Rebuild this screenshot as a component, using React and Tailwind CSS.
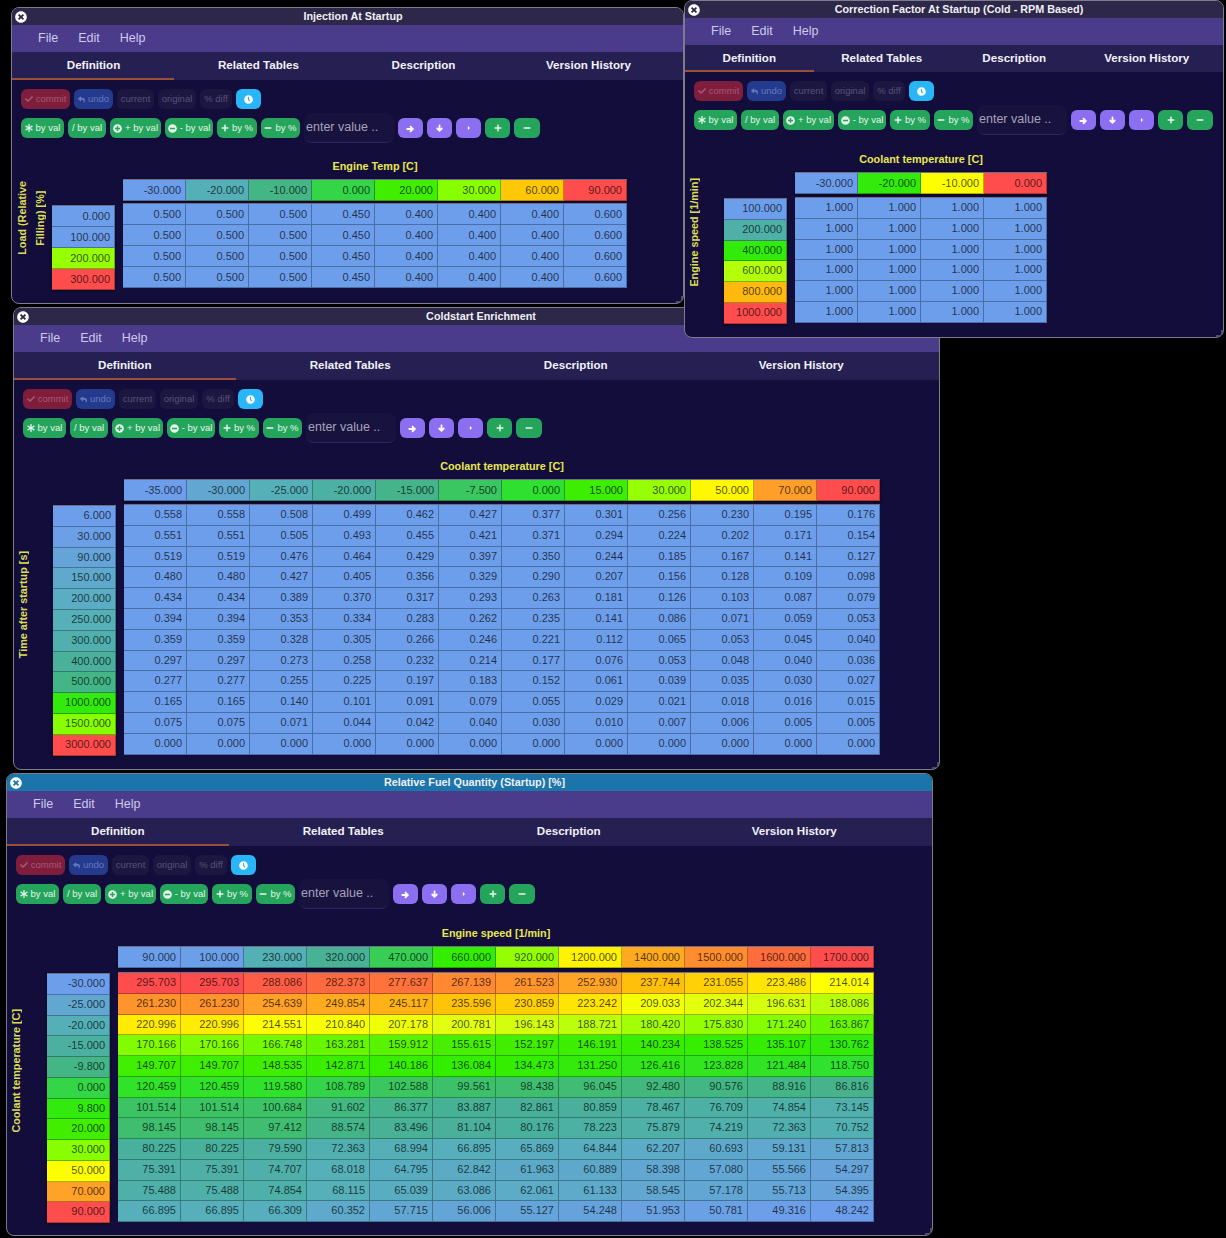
import React from "react";
import {
  FaCheck,
  FaReply,
  FaClock,
  FaAsterisk,
  FaPlusCircle,
  FaMinusCircle,
  FaPlus,
  FaMinus,
  FaCaretRight,
  FaTimesCircle,
} from "react-icons/fa";
import { TiArrowRightThick, TiArrowDownThick } from "react-icons/ti";

// heat stops taken off the table cells, position 0..1 -> rgb
const STOPS = [
  [0, [109, 158, 235]],
  [0.08, [85, 176, 184]],
  [0.14, [72, 176, 152]],
  [0.2, [63, 189, 112]],
  [0.27, [47, 222, 55]],
  [0.35, [51, 238, 0]],
  [0.43, [68, 238, 0]],
  [0.5, [136, 255, 0]],
  [0.61, [221, 255, 17]],
  [0.67, [255, 255, 0]],
  [0.76, [255, 193, 7]],
  [0.84, [255, 159, 42]],
  [0.885, [255, 136, 48]],
  [1, [255, 77, 77]],
];

function heat(t) {
  for (let i = 1; i < STOPS.length; i++) {
    const [p1, c1] = STOPS[i];
    const [p0, c0] = STOPS[i - 1];
    if (t <= p1) {
      const k = (t - p0) / (p1 - p0);
      return `rgb(${c0.map((c, n) => Math.round(c + (c1[n] - c) * k)).join(",")})`;
    }
  }
  return "rgb(255,77,77)";
}

function scale(values) {
  const min = Math.min(...values);
  const max = Math.max(...values);
  return values.map((v) => (v - min) / (max - min));
}

const BLUE = heat(0);

function Cell({ value, color, size }) {
  return (
    <div
      className={`w-[63px] shrink-0 border-r border-b border-black/30 pr-[4px] text-right text-[11px] text-black/70 ${size}`}
      style={{ backgroundColor: color }}
    >
      {value.toFixed(3)}
    </div>
  );
}

const pill = "flex items-center justify-center gap-[3px] h-[20px] rounded-[6px] text-[9.5px] shrink-0";
const green = `${pill} bg-[#25a55c] text-[#e4f5ea]`;
const muted = `${pill} bg-[#1c1740] text-[#57527d]`;
const purple = `${pill} w-[25px] bg-[#8b6ff0] text-white`;

function Toolbar() {
  return (
    <div className="pl-[9px] pt-[9px]">
      <div className="flex gap-[4px]">
        <div className={`${pill} w-[49px] bg-[#7f1d3c] text-[#a85a74]`}>
          <FaCheck size={8} /> commit
        </div>
        <div className={`${pill} w-[39px] bg-[#243a8c] text-[#6478c0]`}>
          <FaReply size={7} /> undo
        </div>
        <div className={`${muted} w-[37px]`}>current</div>
        <div className={`${muted} w-[38px]`}>original</div>
        <div className={`${muted} w-[32px]`}>% diff</div>
        <div className={`${pill} w-[25px] bg-[#29b6f6] text-white`}>
          <FaClock size={9} />
        </div>
      </div>
      <div className="flex items-center gap-[4px] h-[20px] mt-[9px]">
        <div className={`${green} w-[43px]`}>
          <FaAsterisk size={8} /> by val
        </div>
        <div className={`${green} w-[38px]`}>/ by val</div>
        <div className={`${green} w-[51px]`}>
          <FaPlusCircle size={9} /> + by val
        </div>
        <div className={`${green} w-[48px]`}>
          <FaMinusCircle size={9} /> - by val
        </div>
        <div className={`${green} w-[40px]`}>
          <FaPlus size={8} /> by %
        </div>
        <div className={`${green} w-[39px]`}>
          <FaMinus size={8} /> by %
        </div>
        <div className="flex items-center w-[90px] h-[30px] shrink-0 rounded-[8px] border-b border-[#2c2660] bg-[#18123f] pl-[2px] text-[12.5px] text-[#a6a3bb]">
          enter value ..
        </div>
        <div className={purple}>
          <TiArrowRightThick size={11} />
        </div>
        <div className={purple}>
          <TiArrowDownThick size={11} />
        </div>
        <div className={purple}>
          <FaCaretRight size={6} />
        </div>
        <div className={`${green} w-[25px]`}>
          <FaPlus size={8} />
        </div>
        <div className={`${green} w-[26px]`}>
          <FaMinus size={8} />
        </div>
      </div>
    </div>
  );
}

function DataTable({ t }) {
  const xT = scale(t.x);
  const yT = t.yT || scale(t.y);
  const all = t.rows.flat();
  const min = Math.min(...all);
  const max = Math.max(...all);
  return (
    <div className={`flex ${t.tableTop}`}>
      <div className={`flex justify-start items-center shrink-0 ${t.labelCol}`}>
        <div className="[writing-mode:vertical-rl] rotate-180 text-center text-[10.8px] leading-[18px] font-bold text-[#dede52]">
          {t.yLabel.map((line) => (
            <div key={line}>{line}</div>
          ))}
        </div>
      </div>
      <div>
        <div className="pl-[71px] h-[14px] mb-[6px] text-center text-[10.8px] leading-[14px] font-bold text-[#e8e84e]">
          {t.xLabel}
        </div>
        <div className="flex pl-[71px]">
          <div className="flex border-t border-white/40 shadow-[0_1px_2px_rgba(0,0,0,0.6)]">
            {t.x.map((v, i) => (
              <Cell key={i} value={v} color={heat(xT[i])} size="h-[21px] leading-[20px]" />
            ))}
          </div>
        </div>
        <div className={`flex gap-[8px] ${t.gridTop}`}>
          <div className={`border-t border-white/40 shadow-[0_1px_2px_rgba(0,0,0,0.6)] ${t.yTop}`}>
            {t.y.map((v, i) => (
              <Cell key={i} value={v} color={heat(yT[i])} size={t.cell} />
            ))}
          </div>
          <div className="border-t border-white/40">
            {t.rows.map((row, r) => (
              <div key={r} className="flex">
                {row.map((v, i) => (
                  <Cell
                    key={i}
                    value={v}
                    color={t.heat ? heat((v - min) / (max - min)) : BLUE}
                    size={t.cell}
                  />
                ))}
              </div>
            ))}
          </div>
        </div>
      </div>
    </div>
  );
}

function TableWindow({ t }) {
  return (
    <div className={`absolute overflow-hidden rounded-[8px] border border-[#7d7c8c] bg-[#120d3a] ${t.box}`}>
      <div className={`flex items-center h-[17px] pl-[3px] ${t.active ? "bg-[#1b75ab]" : "bg-[#2d2849]"}`}>
        <FaTimesCircle size={12} className="text-white shrink-0" />
        <div className={`flex-1 text-center text-[10.8px] font-bold text-[#f0eff5] ${t.titleFix}`}>{t.title}</div>
      </div>
      <div className="flex items-center gap-[20px] h-[27px] pl-[26px] bg-[#4a3b8b] text-[12.5px] text-[#cfc9ee]">
        <span>File</span>
        <span>Edit</span>
        <span>Help</span>
      </div>
      <div className={`bg-[#262052] ${t.tabBar}`}>
        <div className={`flex h-full ${t.tabFix}`}>
          {["Definition", "Related Tables", "Description", "Version History"].map((tab, i) => (
            <div
              key={tab}
              className={`relative shrink-0 text-center text-[11.6px] leading-[26px] font-bold text-[#f2f1f8] ${t.tab}`}
            >
              {tab}
              {i === 0 && <div className="absolute left-0 right-[2px] bottom-0 h-[2px] bg-[#9c4f38]" />}
            </div>
          ))}
        </div>
      </div>
      <Toolbar />
      <DataTable t={t} />
      <svg className="absolute right-0 bottom-0" width="9" height="9" viewBox="0 0 9 9">
        <path d="M8 2 L8 8 L2 8" fill="none" stroke="#8b8a9a" strokeWidth="1" />
      </svg>
    </div>
  );
}

const rep = (row, n) => Array.from({ length: n }, () => row);

const WINDOWS = [
  {
    title: "Injection At Startup",
    box: "z-10 left-[11px] top-[7px] w-[673px] h-[297px]",
    tab: "w-[165px]",
    tabBar: "h-[28px]",
    tabFix: "-ml-[1px]",
    titleFix: "pr-[4px]",
    labelCol: "w-[40px] pl-[1px] pb-[13px]",
    tableTop: "mt-[21px]",
    gridTop: "mt-[2px]",
    yTop: "mt-[2px]",
    cell: "h-[21px] leading-[20px]",
    xLabel: "Engine Temp [C]",
    yLabel: ["Load (Relative", "Filling) [%]"],
    x: [-30, -20, -10, 0, 20, 30, 60, 90],
    y: [0, 100, 200, 300],
    yT: [0, 0, 0.52, 1],
    rows: rep([0.5, 0.5, 0.5, 0.45, 0.4, 0.4, 0.4, 0.6], 4),
  },
  {
    title: "Coldstart Enrichment",
    box: "z-20 left-[13px] top-[307px] w-[927px] h-[463px]",
    tab: "w-[225.5px]",
    tabBar: "h-[28px]",
    tabFix: "-ml-[2px]",
    titleFix: "pr-[6px]",
    labelCol: "w-[39px] pb-[6px]",
    tableTop: "mt-[21px]",
    gridTop: "mt-[3px]",
    yTop: "mt-[1px]",
    cell: "h-[20.8px] leading-[19.8px]",
    xLabel: "Coolant temperature [C]",
    yLabel: ["Time after startup [s]"],
    x: [-35, -30, -25, -20, -15, -7.5, 0, 15, 30, 50, 70, 90],
    y: [6, 30, 90, 150, 200, 250, 300, 400, 500, 1000, 1500, 3000],
    rows: [
      [0.558, 0.558, 0.508, 0.499, 0.462, 0.427, 0.377, 0.301, 0.256, 0.23, 0.195, 0.176],
      [0.551, 0.551, 0.505, 0.493, 0.455, 0.421, 0.371, 0.294, 0.224, 0.202, 0.171, 0.154],
      [0.519, 0.519, 0.476, 0.464, 0.429, 0.397, 0.35, 0.244, 0.185, 0.167, 0.141, 0.127],
      [0.48, 0.48, 0.427, 0.405, 0.356, 0.329, 0.29, 0.207, 0.156, 0.128, 0.109, 0.098],
      [0.434, 0.434, 0.389, 0.37, 0.317, 0.293, 0.263, 0.181, 0.126, 0.103, 0.087, 0.079],
      [0.394, 0.394, 0.353, 0.334, 0.283, 0.262, 0.235, 0.141, 0.086, 0.071, 0.059, 0.053],
      [0.359, 0.359, 0.328, 0.305, 0.266, 0.246, 0.221, 0.112, 0.065, 0.053, 0.045, 0.04],
      [0.297, 0.297, 0.273, 0.258, 0.232, 0.214, 0.177, 0.076, 0.053, 0.048, 0.04, 0.036],
      [0.277, 0.277, 0.255, 0.225, 0.197, 0.183, 0.152, 0.061, 0.039, 0.035, 0.03, 0.027],
      [0.165, 0.165, 0.14, 0.101, 0.091, 0.079, 0.055, 0.029, 0.021, 0.018, 0.016, 0.015],
      [0.075, 0.075, 0.071, 0.044, 0.042, 0.04, 0.03, 0.01, 0.007, 0.006, 0.005, 0.005],
      [0, 0, 0, 0, 0, 0, 0, 0, 0, 0, 0, 0],
    ],
  },
  {
    title: "Correction Factor At Startup (Cold - RPM Based)",
    box: "z-30 left-[684px] top-0 w-[540px] h-[338px]",
    tab: "w-[132.5px]",
    tabBar: "h-[27px]",
    tabFix: "-ml-[2px]",
    titleFix: "pr-[5px]",
    labelCol: "w-[39px] pb-[11px]",
    tableTop: "mt-[22px]",
    gridTop: "mt-[3px]",
    yTop: "mt-[1px]",
    cell: "h-[20.8px] leading-[19.8px]",
    xLabel: "Coolant temperature [C]",
    yLabel: ["Engine speed [1/min]"],
    x: [-30, -20, -10, 0],
    y: [100, 200, 400, 600, 800, 1000],
    rows: rep([1, 1, 1, 1], 6),
  },
  {
    title: "Relative Fuel Quantity (Startup) [%]",
    box: "z-20 left-[6px] top-[773px] w-[927px] h-[463px]",
    tab: "w-[225.5px]",
    tabBar: "h-[28px]",
    tabFix: "-ml-[2px]",
    titleFix: "pr-[5px]",
    labelCol: "w-[40px] pb-[7px]",
    tableTop: "mt-[22px]",
    gridTop: "mt-[4px]",
    yTop: "mt-[1px]",
    cell: "h-[20.75px] leading-[19.75px]",
    active: true,
    heat: true,
    xLabel: "Engine speed [1/min]",
    yLabel: ["Coolant temperature [C]"],
    x: [90, 100, 230, 320, 470, 660, 920, 1200, 1400, 1500, 1600, 1700],
    y: [-30, -25, -20, -15, -9.8, 0, 9.8, 20, 30, 50, 70, 90],
    rows: [
      [295.703, 295.703, 288.086, 282.373, 277.637, 267.139, 261.523, 252.93, 237.744, 231.055, 223.486, 214.014],
      [261.23, 261.23, 254.639, 249.854, 245.117, 235.596, 230.859, 223.242, 209.033, 202.344, 196.631, 188.086],
      [220.996, 220.996, 214.551, 210.84, 207.178, 200.781, 196.143, 188.721, 180.42, 175.83, 171.24, 163.867],
      [170.166, 170.166, 166.748, 163.281, 159.912, 155.615, 152.197, 146.191, 140.234, 138.525, 135.107, 130.762],
      [149.707, 149.707, 148.535, 142.871, 140.186, 136.084, 134.473, 131.25, 126.416, 123.828, 121.484, 118.75],
      [120.459, 120.459, 119.58, 108.789, 102.588, 99.561, 98.438, 96.045, 92.48, 90.576, 88.916, 86.816],
      [101.514, 101.514, 100.684, 91.602, 86.377, 83.887, 82.861, 80.859, 78.467, 76.709, 74.854, 73.145],
      [98.145, 98.145, 97.412, 88.574, 83.496, 81.104, 80.176, 78.223, 75.879, 74.219, 72.363, 70.752],
      [80.225, 80.225, 79.59, 72.363, 68.994, 66.895, 65.869, 64.844, 62.207, 60.693, 59.131, 57.813],
      [75.391, 75.391, 74.707, 68.018, 64.795, 62.842, 61.963, 60.889, 58.398, 57.08, 55.566, 54.297],
      [75.488, 75.488, 74.854, 68.115, 65.039, 63.086, 62.061, 61.133, 58.545, 57.178, 55.713, 54.395],
      [66.895, 66.895, 66.309, 60.352, 57.715, 56.006, 55.127, 54.248, 51.953, 50.781, 49.316, 48.242],
    ],
  },
];

export default function App() {
  return (
    <div className="relative h-[1238px] overflow-hidden bg-black font-['Liberation_Sans',Arial,sans-serif]">
      {WINDOWS.map((t) => (
        <TableWindow key={t.title} t={t} />
      ))}
    </div>
  );
}
